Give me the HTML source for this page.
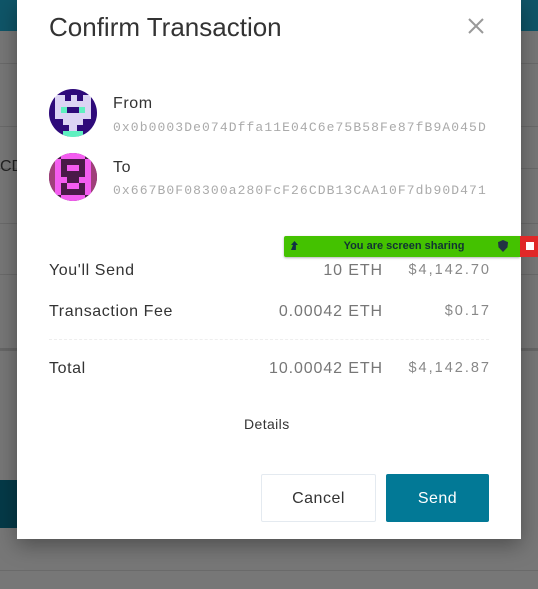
<!DOCTYPE html>
<html><head><style>
body{margin:0;width:538px;height:589px;background:#777;position:relative;overflow:hidden;font-family:"Liberation Sans",sans-serif}
.bg1{position:absolute;left:0;top:0;width:538px;height:31px;background:#0f5568}
.bgrow{position:absolute;left:0;width:538px;height:1px;background:#6a6a6a}
.modal{position:absolute;left:17px;top:0;width:504px;height:539px;background:#fff;box-shadow:0 6px 20px rgba(0,0,0,.35)}
.t{position:absolute;color:#333;white-space:nowrap}
.l{font-size:16px;letter-spacing:0.6px}
.g{color:#777;font-size:16px;letter-spacing:0.9px}
.d{color:#888;font-size:14.5px;letter-spacing:2px}
.mono{font-family:"Liberation Mono",monospace;font-size:13px;color:#aaa;letter-spacing:1.1px}
</style></head><body>
<div class="bg1"></div>
<div style="position:absolute;left:0;top:480px;width:17px;height:48px;background:#053a48"></div>
<div class="bgrow" style="top:63px"></div><div class="bgrow" style="top:126px"></div>
<div class="bgrow" style="top:168px"></div><div class="bgrow" style="top:223px"></div>
<div class="bgrow" style="top:274px"></div><div class="bgrow" style="top:348px;background:#666;height:3px"></div>
<div class="bgrow" style="top:570px"></div>
<div class="t" style="left:0;top:158px;font-size:16px;color:#222">CD</div>
<div class="modal">
<div class="t" style="left:32px;top:12px;font-size:26px;color:#333">Confirm Transaction</div>
<svg style="position:absolute;left:451px;top:18px" width="16" height="16"><path d="M1 1L15 15M15 1L1 15" stroke="#999" stroke-width="2"/></svg>
<svg style="position:absolute;left:32px;top:89px" width="48" height="48" viewBox="0 0 48 48"><defs><clipPath id="c"><circle cx="24" cy="24" r="24"/></clipPath></defs><g clip-path="url(#c)">
<rect width="48" height="48" fill="#dcd4f4"/>
<rect x="0" y="0" width="48" height="6" fill="#2e0a7a"/>
<rect x="0" y="0" width="6" height="48" fill="#2e0a7a"/><rect x="42" y="0" width="6" height="48" fill="#2e0a7a"/>
<rect x="16" y="6" width="6" height="6" fill="#2e0a7a"/><rect x="28" y="6" width="6" height="6" fill="#2e0a7a"/>
<rect x="12" y="18" width="6" height="6" fill="#5ff0c0"/><rect x="30" y="18" width="6" height="6" fill="#5ff0c0"/>
<rect x="18" y="18" width="12" height="6" fill="#2e0a7a"/>
<rect x="6" y="30" width="8" height="18" fill="#2e0a7a"/><rect x="34" y="30" width="8" height="18" fill="#2e0a7a"/>
<rect x="14" y="36" width="6" height="12" fill="#2e0a7a"/><rect x="28" y="36" width="6" height="12" fill="#2e0a7a"/>
<rect x="14" y="42" width="20" height="6" fill="#5ff0c0"/></g></svg>
<div class="t l" style="left:96px;top:95px">From</div>
<div class="t mono" style="left:96px;top:120px">0x0b0003De074Dffa11E04C6e75B58Fe87fB9A045D</div>
<svg style="position:absolute;left:32px;top:153px" width="48" height="48" viewBox="0 0 48 48"><defs><clipPath id="d"><circle cx="24" cy="24" r="24"/></clipPath></defs><g clip-path="url(#d)">
<rect width="48" height="48" fill="#4a1a48"/>
<rect x="0" y="0" width="6" height="48" fill="#a0407a"/><rect x="42" y="0" width="6" height="48" fill="#a0407a"/>
<rect x="6" y="6" width="6" height="36" fill="#f45cf0"/><rect x="36" y="6" width="6" height="36" fill="#f45cf0"/>
<rect x="12" y="0" width="24" height="6" fill="#f45cf0"/>
<rect x="18" y="12" width="12" height="6" fill="#f45cf0"/>
<rect x="12" y="24" width="6" height="6" fill="#f45cf0"/><rect x="30" y="24" width="6" height="6" fill="#f45cf0"/>
<rect x="18" y="30" width="12" height="6" fill="#f45cf0"/>
<rect x="12" y="42" width="24" height="6" fill="#f45cf0"/></g></svg>
<div class="t l" style="left:96px;top:159px">To</div>
<div class="t mono" style="left:96px;top:183px">0x667B0F08300a280FcF26CDB13CAA10F7db90D471</div>
<div class="t l" style="left:32px;top:262px">You'll Send</div>
<div class="t g" style="right:138px;top:262px">10 ETH</div>
<div class="t d" style="right:30px;top:262px">$4,142.70</div>
<div class="t l" style="left:32px;top:303px">Transaction Fee</div>
<div class="t g" style="right:138px;top:303px">0.00042 ETH</div>
<div class="t d" style="right:30px;top:303px">$0.17</div>
<div style="position:absolute;left:32px;right:32px;top:339px;border-top:1px dashed #eee"></div>
<div class="t l" style="left:32px;top:360px">Total</div>
<div class="t g" style="right:138px;top:360px">10.00042 ETH</div>
<div class="t d" style="right:30px;top:360px">$4,142.87</div>
<div class="t" style="left:227px;top:416px;font-size:14px;letter-spacing:0.4px">Details</div>
<div style="position:absolute;left:244px;top:474px;width:115px;height:48px;border:1px solid #e4eaf0;box-sizing:border-box;border-radius:2px;font-size:16px;letter-spacing:0.5px;color:#333;text-align:center;line-height:48px">Cancel</div>
<div style="position:absolute;left:369px;top:474px;width:103px;height:48px;background:#027996;border-radius:2px;font-size:16px;letter-spacing:0.5px;color:#fff;text-align:center;line-height:50px">Send</div>
</div>
<div style="position:absolute;left:284px;top:236px;width:236px;height:21px;background:#44c200;border-radius:2px 0 0 2px;box-shadow:0 1px 2px rgba(0,0,0,.3);font-size:11px;font-weight:bold;color:#133;text-align:center;line-height:21px;box-sizing:border-box;padding-left:4px">You are screen sharing</div>
<div style="position:absolute;left:291px;top:241px;width:7px;height:9px;background:#134;clip-path:polygon(50% 0,100% 45%,70% 45%,70% 100%,0 100%,30% 45%,0 45%)"></div>
<div style="position:absolute;left:498px;top:240px;width:10px;height:12px;background:#234;clip-path:polygon(50% 0,100% 18%,95% 60%,50% 100%,5% 60%,0 18%)"></div>
<div style="position:absolute;left:520px;top:236px;width:18px;height:21px;background:#e02828"></div>
<div style="position:absolute;left:526px;top:242px;width:8px;height:8px;background:#fff"></div>
</body></html>
